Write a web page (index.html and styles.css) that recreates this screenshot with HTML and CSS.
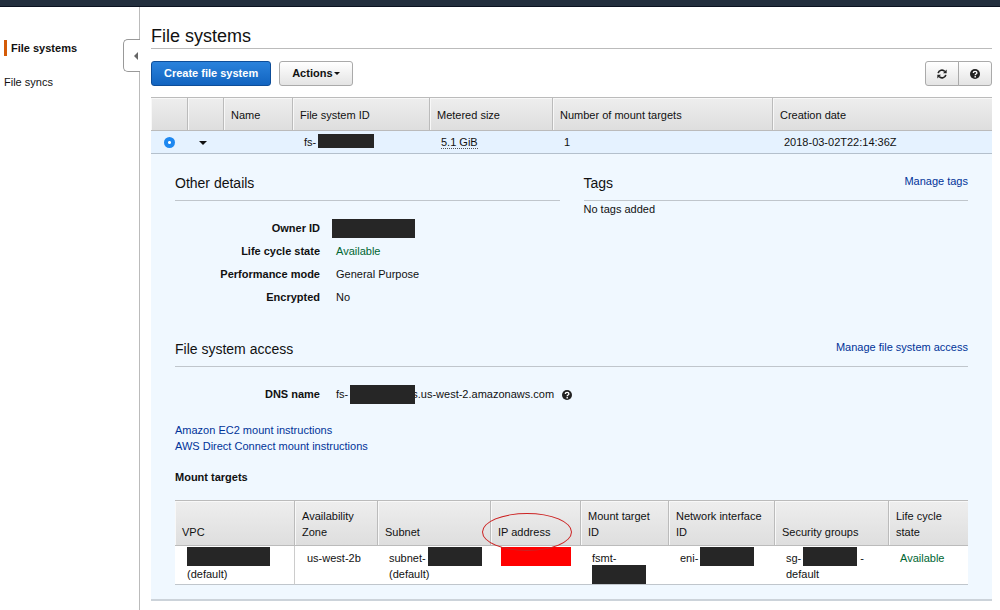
FILE: index.html
```html
<!DOCTYPE html>
<html lang="en">
<head>
  <meta charset="UTF-8">
  <meta name="viewport" content="width=device-width, initial-scale=1.0">
  <title>File systems</title>
  <link rel="stylesheet" href="styles.css">
</head>
<body>
  <header class="topbar"></header>
  <div class="layout">
    <nav class="sidebar">
      <a class="nav-link active" href="#">File systems</a>
      <a class="nav-link" href="#">File syncs</a>
      <button class="collapse" aria-label="Collapse navigation"></button>
    </nav>

    <main class="content">
      <h1>File systems</h1>

      <div class="toolbar">
        <button class="btn btn-primary">Create file system</button>
        <button class="btn">Actions<span class="caret"></span></button>
        <div class="btn-group">
          <button class="btn btn-icon" aria-label="Refresh">
            <svg width="10" height="10" viewBox="0 0 12 12" fill="none" stroke="#222" stroke-width="2">
              <path d="M1.4 5A4.6 4.6 0 0 1 9.4 3M10.6 7A4.6 4.6 0 0 1 2.6 9"/>
              <path d="M11.6 .6V5H7.2zM.4 11.4V7h4.4z" fill="#222" stroke="none"/>
            </svg>
          </button>
          <button class="btn btn-icon" aria-label="Help">
            <svg width="10" height="10" viewBox="0 0 10 10">
              <circle cx="5" cy="5" r="5" fill="#222"/>
              <path d="M3.3 3.9C3.3 1.9 6.9 1.9 6.9 3.9C6.9 5 5.2 5 5.2 6.2M5.2 7v1.4" fill="none" stroke="#fff" stroke-width="1.4"/>
            </svg>
          </button>
        </div>
      </div>

      <table class="grid systems">
        <colgroup>
          <col class="w-36"><col class="w-36"><col class="w-69"><col class="w-137"><col class="w-123"><col class="w-220"><col>
        </colgroup>
        <thead>
          <tr>
            <th></th>
            <th></th>
            <th>Name</th>
            <th>File system ID</th>
            <th>Metered size</th>
            <th>Number of mount targets</th>
            <th>Creation date</th>
          </tr>
        </thead>
        <tbody>
          <tr>
            <td class="center"><input type="radio" name="fs" aria-label="Select file system" checked></td>
            <td><span class="caret"></span></td>
            <td></td>
            <td>fs-<span class="redacted short"></span></td>
            <td><span class="dotted">5.1 GiB</span></td>
            <td>1</td>
            <td>2018-03-02T22:14:36Z</td>
          </tr>
        </tbody>
      </table>

      <div class="details">
        <div class="columns">
          <section>
            <div class="section-head"><h2>Other details</h2></div>
            <dl class="props">
              <dt>Owner ID</dt><dd><span class="redacted owner"></span></dd>
              <dt>Life cycle state</dt><dd class="ok">Available</dd>
              <dt>Performance mode</dt><dd>General Purpose</dd>
              <dt>Encrypted</dt><dd>No</dd>
            </dl>
          </section>
          <section>
            <div class="section-head"><h2>Tags</h2><a href="#">Manage tags</a></div>
            <p>No tags added</p>
          </section>
        </div>

        <section class="access">
          <div class="section-head"><h2>File system access</h2><a href="#">Manage file system access</a></div>
          <dl class="props">
            <dt>DNS name</dt>
            <dd>fs-<span class="redacted dns"></span>s.us-west-2.amazonaws.com
              <svg class="help" width="10" height="10" viewBox="0 0 10 10">
                <circle cx="5" cy="5" r="5" fill="#222"/>
                <path d="M3.3 3.9C3.3 1.9 6.9 1.9 6.9 3.9C6.9 5 5.2 5 5.2 6.2M5.2 7v1.4" fill="none" stroke="#fff" stroke-width="1.4"/>
              </svg>
            </dd>
          </dl>
          <div class="links">
            <a href="#">Amazon EC2 mount instructions</a>
            <a href="#">AWS Direct Connect mount instructions</a>
          </div>
          <h3>Mount targets</h3>
          <table class="grid targets">
            <colgroup>
              <col class="w-119"><col class="w-83"><col class="w-113"><col class="w-90"><col class="w-88"><col class="w-106"><col class="w-114"><col>
            </colgroup>
            <thead>
              <tr>
                <th>VPC</th>
                <th>Availability Zone</th>
                <th>Subnet</th>
                <th><span class="circled">IP address</span></th>
                <th>Mount target ID</th>
                <th>Network interface ID</th>
                <th>Security groups</th>
                <th>Life cycle state</th>
              </tr>
            </thead>
            <tbody>
              <tr>
                <td><span class="redacted owner"></span><br>(default)</td>
                <td>us-west-2b</td>
                <td>subnet-<span class="redacted"></span><br>(default)</td>
                <td><span class="redacted ip"></span></td>
                <td>fsmt-<br><span class="redacted target"></span></td>
                <td>eni-<span class="redacted"></span></td>
                <td>sg-<span class="redacted"></span> -<br>default</td>
                <td class="ok">Available</td>
              </tr>
            </tbody>
          </table>
        </section>
      </div>
    </main>
  </div>
</body>
</html>
```
FILE: styles.css
```css
* {
  box-sizing: border-box;
}

body {
  margin: 0;
  background: #fff;
  color: #111;
  font-family: "Liberation Sans", Arial, sans-serif;
  font-size: 11px;
  line-height: 16px;
}

a {
  color: #039;
  text-decoration: none;
}

h1, h2, h3, p, dl, dd {
  margin: 0;
}

.topbar {
  height: 7px;
  background: #232f3e;
  border-bottom: 1px solid #0b1220;
}

.layout {
  display: flex;
  min-height: calc(100vh - 7px);
}

.sidebar {
  position: relative;
  flex: none;
  width: 140px;
  padding: 33px 4px 0;
  border-right: 1px solid #bbb;
}

.nav-link {
  display: block;
  margin-bottom: 18px;
  color: #111;
}

.nav-link.active {
  padding-left: 4px;
  border-left: 3px solid #d45b07;
  font-weight: bold;
}

.collapse {
  position: absolute;
  top: 32px;
  right: -1px;
  width: 17px;
  height: 33px;
  padding: 0;
  background: #fff;
  border: 1px solid #999;
  border-right: 0;
  border-radius: 5px 0 0 5px;
}

.collapse::before {
  content: "";
  display: block;
  width: 4px;
  margin-left: 6px;
  border: 4px solid transparent;
  border-left: 0;
  border-right-color: #666;
}

.content {
  flex: 1;
  min-width: 0;
  padding: 18px 8px 8px 11px;
}

h1 {
  height: 24px;
  border-bottom: 1px solid #bbb;
  font-size: 18px;
  font-weight: normal;
  line-height: 22px;
}

.toolbar {
  display: flex;
  gap: 8px;
  margin: 12px 0 11px;
}

.btn {
  height: 25px;
  padding: 0 12px 2px;
  background: linear-gradient(#fff, #e4e4e4);
  border: 1px solid #aaa;
  border-radius: 3px;
  color: #111;
  font: bold 11px "Liberation Sans", Arial, sans-serif;
}

.btn-primary {
  background: linear-gradient(#2a82dc, #1264c0);
  border-color: #0d4d99;
  color: #fff;
}

.btn-group {
  display: flex;
  margin-left: auto;
}

.btn-icon {
  display: flex;
  align-items: center;
  justify-content: center;
  width: 34px;
  padding: 0;
}

.btn-icon:first-child {
  border-radius: 3px 0 0 3px;
}

.btn-icon + .btn-icon {
  margin-left: -1px;
  border-radius: 0 3px 3px 0;
}

.caret {
  display: inline-block;
  border: 4px solid transparent;
  border-top-color: #111;
  border-bottom: 0;
  vertical-align: middle;
}

.btn .caret {
  margin-left: 1px;
  border-width: 3px;
  border-bottom: 0;
}

.grid {
  width: 100%;
  border-collapse: separate;
  border-spacing: 0;
  table-layout: fixed;
}

.grid th {
  background: linear-gradient(#eee, #dedede);
  border-top: 1px solid #bbb;
  border-bottom: 1px solid #bbb;
  border-left: 1px solid #bbb;
  font-weight: normal;
  text-align: left;
  vertical-align: bottom;
  box-shadow: inset 1px 1px #f8f8f8;
}

.grid th:first-child {
  border-left: 0;
}

.systems th {
  height: 34px;
  padding: 0 0 7px 7px;
}

.systems td {
  height: 23px;
  padding: 0 0 0 12px;
  background: #e5f2ff;
  border-bottom: 1px solid #b4c0cc;
}

.systems td.center {
  padding: 0;
  text-align: center;
}

.systems input {
  display: block;
  width: 11px;
  height: 11px;
  margin: 0 auto;
  appearance: none;
  background: radial-gradient(circle, #fff 1px, #1e88f0 2px);
  border-radius: 50%;
}

/* negative margins keep the tall boxes from stretching the line */
.redacted {
  display: inline-block;
  width: 54px;
  height: 19px;
  margin: -4px 0 -4px 2px;
  background: #262626;
}

.redacted.short {
  width: 56px;
  height: 14px;
  margin: -2px 0 -2px 2px;
}

.redacted.owner {
  width: 83px;
  margin-left: 0;
}

.redacted.dns {
  position: relative;
  width: 65px;
  margin-right: -3px;
  margin-bottom: -6px;
}

.redacted.ip {
  width: 70px;
  margin-left: -1px;
  background: #f00;
}

.redacted.target {
  margin-left: 0;
  margin-bottom: -6px;
}

.dotted {
  border-bottom: 1px dotted #555;
}

.details {
  padding: 17px 24px 14px;
  background: #f0f8ff;
  border-bottom: 2px solid #ccd3da;
}

.columns {
  display: grid;
  grid-template-columns: 1fr 1fr;
  gap: 24px;
}

.section-head {
  display: flex;
  justify-content: space-between;
  height: 30px;
  padding-top: 2px;
  border-bottom: 1px solid #c0c6cc;
}

h2 {
  font-size: 14px;
  font-weight: normal;
  line-height: 20px;
}

.props {
  display: grid;
  grid-template-columns: 145px 1fr;
  gap: 7px 16px;
  padding-top: 19px;
}

.props dt {
  font-weight: bold;
  text-align: right;
}

.props dd > .owner {
  display: block;
  margin: -1px 0 -2px -4px;
}

.ok {
  color: #063;
}

.help {
  margin-left: 5px;
  vertical-align: middle;
}

.access {
  margin-top: 32px;
}

.links {
  display: flex;
  flex-direction: column;
  align-items: flex-start;
  margin: 20px 0 15px;
}

h3 {
  margin-bottom: 15px;
  font-size: 11px;
}

.targets th {
  height: 46px;
  padding: 0 6px 5px 7px;
}

.targets td {
  height: 39px;
  padding: 4px 0 2px 12px;
  background: #fff;
  border-bottom: 1px solid #c0c6cc;
  vertical-align: top;
}

.targets td:nth-child(2) {
  border-left: 1px solid #ccc;
}

/* ring drawn over the header cell */
.circled {
  position: relative;
}

.circled::after {
  content: "";
  position: absolute;
  top: -13px;
  left: -16px;
  width: 88px;
  height: 36px;
  border: 1px solid #c22;
  border-radius: 50%;
}

.w-36 { width: 36px; }
.w-69 { width: 69px; }
.w-83 { width: 83px; }
.w-88 { width: 88px; }
.w-90 { width: 90px; }
.w-106 { width: 106px; }
.w-113 { width: 113px; }
.w-114 { width: 114px; }
.w-119 { width: 119px; }
.w-123 { width: 123px; }
.w-137 { width: 137px; }
.w-220 { width: 220px; }
```
